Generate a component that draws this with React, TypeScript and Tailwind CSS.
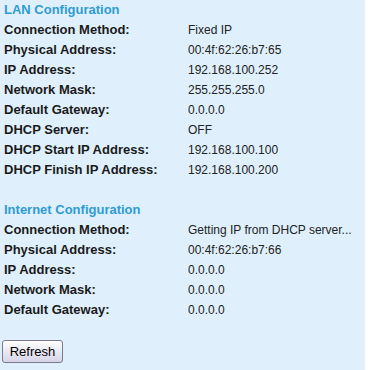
const lan: [string, string][] = [
  ["Connection Method:", "Fixed IP"],
  ["Physical Address:", "00:4f:62:26:b7:65"],
  ["IP Address:", "192.168.100.252"],
  ["Network Mask:", "255.255.255.0"],
  ["Default Gateway:", "0.0.0.0"],
  ["DHCP Server:", "OFF"],
  ["DHCP Start IP Address:", "192.168.100.100"],
  ["DHCP Finish IP Address:", "192.168.100.200"],
];

const wan: [string, string][] = [
  ["Connection Method:", "Getting IP from DHCP server..."],
  ["Physical Address:", "00:4f:62:26:b7:66"],
  ["IP Address:", "0.0.0.0"],
  ["Network Mask:", "0.0.0.0"],
  ["Default Gateway:", "0.0.0.0"],
];

function Section({ title, rows }: { title: string; rows: [string, string][] }) {
  return (
    <div>
      <div className="flex h-[20px] items-center pl-[4px] text-[13px] font-bold text-[#2f9bd3]">
        {title}
      </div>
      {rows.map(([label, value]) => (
        <div key={label} className="flex h-[20px] items-center text-[13px]">
          <div className="w-[188px] shrink-0 pl-[4px] font-bold text-[#1a1a1a]">{label}</div>
          <div className="whitespace-nowrap text-[12px] text-[#222]">{value}</div>
        </div>
      ))}
    </div>
  );
}

export default function App() {
  return (
    <div className="h-[370px] w-[381px] bg-white font-['Liberation_Sans',Arial,sans-serif]">
      <div className="flex h-full w-[365px] flex-col bg-[#dff0fc]">
        <Section title="LAN Configuration" rows={lan} />
        <div className="h-[20px]" />
        <Section title="Internet Configuration" rows={wan} />
        <div className="pl-[2px] pt-[19px]">
          <button className="h-[23px] w-[61px] rounded-[3px] border border-[#7a7a8c] bg-gradient-to-b from-white to-[#d6d4e8] text-[13px] text-black">
            Refresh
          </button>
        </div>
      </div>
    </div>
  );
}
